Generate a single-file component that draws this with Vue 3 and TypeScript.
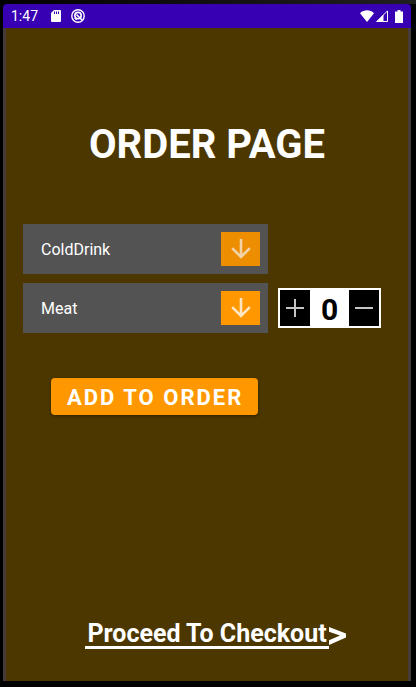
<script setup lang="ts">
import { ref } from 'vue'

const drinks: string[] = ['ColdDrink', 'Water', 'Juice']
const meals: string[] = ['Meat', 'Chicken', 'Fish']

const drink = ref<string>('ColdDrink')
const meal = ref<string>('Meat')
const quantity = ref<number>(0)

function increase(): void {
  quantity.value += 1
}

function decrease(): void {
  quantity.value = Math.max(0, quantity.value - 1)
}
</script>

<template>
  <div class="frame">
    <div class="device">
      <header class="status">
        <span class="time">1:47</span>
        <svg class="sd" viewBox="0 0 10 12" aria-hidden="true">
          <path d="M3 0h6a1 1 0 0 1 1 1v10a1 1 0 0 1-1 1H1a1 1 0 0 1-1-1V3z" fill="#fff" />
          <path d="M3.500 1.500v2.500M5.500 1.500v2.500M7.500 1.500v2.500" stroke="#3700b3" stroke-width="1" />
        </svg>
        <svg class="badge" viewBox="0 0 14 14" fill="none" stroke="#fff" aria-hidden="true">
          <circle cx="7" cy="7" r="6.2" stroke-width="1.4" />
          <circle cx="7" cy="6.600" r="3.200" stroke-width="1.6" />
          <path d="M5.500 5.500l5.500 5.500M3.800 9l2 1.500" stroke-width="1.600" />
        </svg>
        <svg class="wifi" viewBox="0 0 14 12" aria-hidden="true">
          <path d="M0 3.200C4 -.6 10 -.6 14 3.200L7 12z" fill="#fff" />
        </svg>
        <svg class="signal" viewBox="0 0 12 12" aria-hidden="true">
          <path d="M.9 11.500L11.500 .9v10.600z" fill="none" stroke="#fff" />
          <path d="M0 12L7.500 4.500V12z" fill="#fff" />
        </svg>
        <svg class="battery" viewBox="0 0 8 13" aria-hidden="true">
          <path d="M2.500 0h3v1.500H8V13H0V1.500h2.500z" fill="#fff" />
        </svg>
      </header>

      <main class="page">
        <h1 class="title">ORDER PAGE</h1>

        <form class="order" @submit.prevent>
          <div class="row">
            <div class="field">
              <select v-model="drink" class="select" aria-label="Drink">
                <option v-for="item in drinks" :key="item">{{ item }}</option>
              </select>
              <span class="arrow arrow-dim">
                <svg viewBox="0 0 20 20" aria-hidden="true">
                  <path d="M10 0v18M1.200 9.200L10 18l8.800-8.800" />
                </svg>
              </span>
            </div>
          </div>

          <div class="row">
            <div class="field">
              <select v-model="meal" class="select" aria-label="Meal">
                <option v-for="item in meals" :key="item">{{ item }}</option>
              </select>
              <span class="arrow">
                <svg viewBox="0 0 20 20" aria-hidden="true">
                  <path d="M10 0v18M1.200 9.200L10 18l8.800-8.800" />
                </svg>
              </span>
            </div>
            <div class="stepper">
              <button type="button" class="step" aria-label="Increase" @click="increase">
                <svg viewBox="0 0 18 18" aria-hidden="true"><path d="M9 0v18M0 9h18" /></svg>
              </button>
              <output class="count">{{ quantity }}</output>
              <button type="button" class="step" aria-label="Decrease" @click="decrease">
                <svg viewBox="0 0 18 18" aria-hidden="true"><path d="M0 9h18" /></svg>
              </button>
            </div>
          </div>

          <button type="submit" class="add">ADD TO ORDER</button>
        </form>

        <a class="checkout" href="#checkout">
          <span class="checkout-text">Proceed To Checkout</span>
          <svg class="chevron" viewBox="0 0 17 18" aria-hidden="true">
            <path d="M0 0L17 6.500V10.500L0 18V13.200L11 8.600L0 4.800z" fill="#fff" />
          </svg>
        </a>
      </main>
    </div>
  </div>
</template>

<style>
body {
  background: #000;
}
</style>

<style scoped>
.frame {
  box-sizing: border-box;
  min-height: 100vh;
  padding: 4px 5px 6px 3px;
  display: flex;
  background: linear-gradient(90deg, #000 0, #202020 100%) top / 100% 4px no-repeat #000;
  color: #fff;
  font-family: Roboto, "Liberation Sans", sans-serif;
}

.device {
  flex: 1;
  display: flex;
  flex-direction: column;
  border-radius: 4px 4px 0 0;
  overflow: hidden;
}

.status {
  height: 24px;
  padding: 0 8px;
  display: flex;
  align-items: center;
  background: #3700b3;
}

.time {
  font-size: 14px;
  line-height: 24px;
}

.sd {
  width: 10px;
  height: 12px;
  margin-left: 13px;
}

.badge {
  width: 14px;
  height: 14px;
  margin-left: 10px;
}

.wifi {
  width: 14px;
  height: 12px;
  margin-left: auto;
}

.signal {
  width: 12px;
  height: 12px;
  margin-left: 2px;
}

.battery {
  width: 8px;
  height: 13px;
  margin-left: 7px;
}

.page {
  flex: 1;
  display: flex;
  flex-direction: column;
  padding: 93px 17px 32px;
  border: solid #453b3b;
  border-width: 0 3px;
  background: #4c3700;
}

.title {
  margin: 0;
  text-align: center;
  font-size: 40px;
  line-height: 48px;
  font-weight: 700;
}

.order {
  margin-top: 55px;
  display: flex;
  flex-direction: column;
  align-items: stretch;
  gap: 9px;
}

.row {
  display: grid;
  grid-template-columns: minmax(0, 245fr) minmax(0, 113fr);
  column-gap: 10px;
  align-items: center;
}

.field {
  display: grid;
  align-items: center;
}

.select {
  grid-area: 1 / 1;
  width: 100%;
  height: 50px;
  margin: 0;
  padding: 2px 56px 0 18px;
  border: 0;
  border-radius: 0;
  appearance: none;
  background: #535353;
  color: #fff;
  font: 400 16px/24px Roboto, "Liberation Sans", sans-serif;
}

.arrow {
  grid-area: 1 / 1;
  justify-self: end;
  width: 39px;
  height: 34px;
  margin-right: 8px;
  display: flex;
  align-items: center;
  justify-content: center;
  background: #ff9800;
  pointer-events: none;
}

.arrow-dim {
  background: #ed8e00;
}

.arrow svg {
  width: 20px;
  height: 20px;
  fill: none;
  stroke: #ffe6c2;
  stroke-width: 2.6;
}

.arrow-dim svg {
  stroke: #f2d3a8;
}

.stepper {
  box-sizing: border-box;
  width: 103px;
  height: 40px;
  border: 2px solid #fff;
  display: flex;
  background: #fff;
}

.step {
  width: 30px;
  padding: 0;
  border: 0;
  display: flex;
  align-items: center;
  justify-content: center;
  background: #000;
}

.step svg {
  width: 18px;
  height: 18px;
  fill: none;
  stroke: #c4c4c4;
  stroke-width: 2;
}

.count {
  flex: 1;
  text-align: center;
  color: #000;
  font-size: 30px;
  line-height: 40px;
  font-weight: 700;
}

.add {
  align-self: flex-start;
  height: 37px;
  margin: 36px 0 0 28px;
  padding: 2px 15px 0 16px;
  border: 0;
  border-radius: 4px;
  background: #ff9800;
  box-shadow: 0 1px 3px rgba(0, 0, 0, 0.4);
  color: #fff;
  font: 700 22px/35px Roboto, "Liberation Sans", sans-serif;
  letter-spacing: 2px;
}

.checkout {
  align-self: center;
  margin-top: auto;
  padding-left: 17px;
  display: flex;
  align-items: center;
  color: #fff;
  text-decoration: none;
}

.checkout-text {
  padding: 0 2px;
  border-bottom: 3px solid #fff;
  font-size: 25px;
  line-height: 24px;
  font-weight: 700;
}

.chevron {
  width: 17px;
  height: 18px;
}
</style>
